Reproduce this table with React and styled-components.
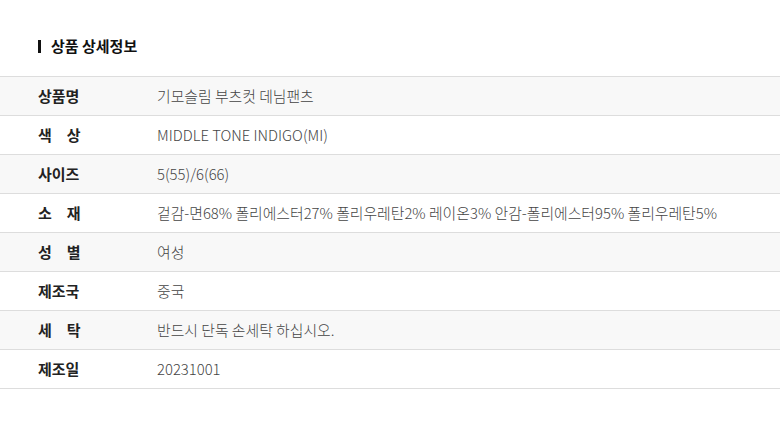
import React from "react";
import styled, { createGlobalStyle } from "styled-components";

const Global = createGlobalStyle`
  html, body { margin: 0; padding: 0; background: #fff; }
  body { font-family: "Noto Sans CJK KR", "Noto Sans", sans-serif; }
`;

const Page = styled.div`
  width: 780px;
  padding-top: 36px;
`;

const Title = styled.h2`
  display: flex;
  align-items: center;
  gap: 10px;
  margin: 0 0 20px 0;
  padding-left: 38px;
  font-size: 15px;
  font-weight: 700;
  color: #111;
  line-height: 20px;
  &::before {
    content: "";
    width: 3px;
    height: 13px;
    background: #111;
  }
`;

const Table = styled.div`
  border-top: 1px solid #ddd;
`;

const Row = styled.div`
  display: flex;
  align-items: center;
  height: 38px;
  border-bottom: 1px solid #ddd;
  background: ${(p) => (p.$shade ? "#f8f8f8" : "#fff")};
`;

const Label = styled.div`
  width: 157px;
  padding-left: 38px;
  box-sizing: border-box;
  flex: none;
  font-size: 15px;
  font-weight: 700;
  color: #222;
  white-space: pre;
  margin-top: -1px;
`;

const Value = styled.div`
  font-size: 14.85px;
  font-weight: 300;
  color: #444;
  margin-top: -1px;
`;

const rows = [
  ["상품명", "기모슬림 부츠컷 데님팬츠"],
  ["색　상", "MIDDLE TONE INDIGO(MI)"],
  ["사이즈", "5(55)/6(66)"],
  ["소　재", "겉감-면68% 폴리에스터27% 폴리우레탄2% 레이온3% 안감-폴리에스터95% 폴리우레탄5%"],
  ["성　별", "여성"],
  ["제조국", "중국"],
  ["세　탁", "반드시 단독 손세탁 하십시오."],
  ["제조일", "20231001"],
];

export default function App() {
  return (
    <Page>
      <Global />
      <Title>상품 상세정보</Title>
      <Table>
        {rows.map(([k, v], i) => (
          <Row key={k} $shade={i % 2 === 0}>
            <Label>{k}</Label>
            <Value>{v}</Value>
          </Row>
        ))}
      </Table>
    </Page>
  );
}
